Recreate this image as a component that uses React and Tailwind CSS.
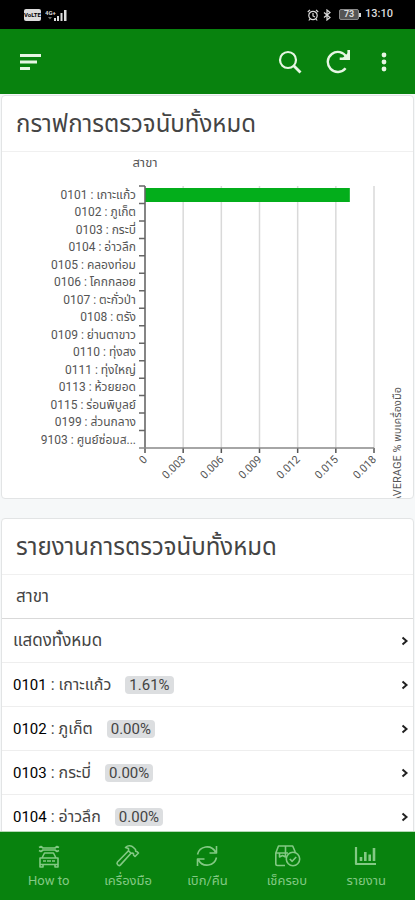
import React from 'react';

const BRANCHES = [
    { code: '0101', name: 'เกาะแก้ว', value: 0.0161 },
    { code: '0102', name: 'ภูเก็ต', value: 0 },
    { code: '0103', name: 'กระบี่', value: 0 },
    { code: '0104', name: 'อ่าวลึก', value: 0 },
    { code: '0105', name: 'คลองท่อม', value: 0 },
    { code: '0106', name: 'โคกกลอย', value: 0 },
    { code: '0107', name: 'ตะกั่วป่า', value: 0 },
    { code: '0108', name: 'ตรัง', value: 0 },
    { code: '0109', name: 'ย่านตาขาว', value: 0 },
    { code: '0110', name: 'ทุ่งสง', value: 0 },
    { code: '0111', name: 'ทุ่งใหญ่', value: 0 },
    { code: '0113', name: 'ห้วยยอด', value: 0 },
    { code: '0115', name: 'ร่อนพิบูลย์', value: 0 },
    { code: '0199', name: 'ส่วนกลาง', value: 0 },
    { code: '9103', name: 'ศูนย์ซ่อมส...', value: 0 },
];

const TICKS = [0, 0.003, 0.006, 0.009, 0.012, 0.015, 0.018];

// Chart geometry, in viewBox units
const PLOT = { left: 143, right: 372, top: 34, bottom: 296 };
const xFor = (value) => PLOT.left + (value / 0.018) * (PLOT.right - PLOT.left);
const BAND = (PLOT.bottom - PLOT.top) / BRANCHES.length;

const StatusBar = () => (
    <div className="flex h-[29px] shrink-0 items-center justify-between bg-black pl-6 pr-[22px] text-[#dcdcdc]">
        <div className="flex items-center gap-1">
            <span className="flex h-3 w-[17px] items-center justify-center rounded-xs bg-[#dcdcdc] text-[6px] font-bold text-black">VoLTE</span>
            <svg className="h-3 w-[22px]" viewBox="0 0 22 12" fill="currentColor">
                <text x="0" y="6" fontSize="6" fontWeight="700">4G+</text>
                <path d="M3 8h4l-2 2.500z" opacity=".5" />
                <path d="M9 9h2v3H9zM12 7h2v5h-2zM15.500 4h2v8h-2zM19 1h2.500v11H19z" />
            </svg>
        </div>
        <div className="flex items-center gap-1">
            <svg className="size-3" viewBox="0 0 12 12" fill="none" stroke="currentColor" strokeWidth="1.200">
                <circle cx="6" cy="6.500" r="4.200" />
                <path d="M6 4v3l2 1M.8 3 3 .8M11.200 3 9 .8M3 10l-1.200 1.500M9 10l1.200 1.500" />
            </svg>
            <svg className="h-3 w-2" viewBox="0 0 8 12" fill="none" stroke="currentColor" strokeWidth="1.200">
                <path d="M1 3.500 7 8.500 4 11V1l3 2.500L1 8.500" />
            </svg>
            <div className="flex items-center pl-1">
                <span className="flex h-[11px] w-5 items-center justify-center rounded-xs border border-[#8a8a8a] bg-[#555] text-[9px] font-bold">73</span>
                <span className="h-1 w-0.5 bg-[#dcdcdc]" />
            </div>
            <span className="text-[11px] font-medium">13:10</span>
        </div>
    </div>
);

const AppBar = () => (
    <header className="flex h-[65px] shrink-0 items-center bg-[#08820e] pl-[18px] pr-[19px] text-[#e6f6e3]">
        <button aria-label="Menu" className="mr-auto">
            <svg className="size-6" viewBox="0 0 24 24" fill="currentColor">
                <path d="M2 4h21v3H2zM2 10.500h17v3H2zM2 17h10v3H2z" />
            </svg>
        </button>
        <button aria-label="Search" className="mr-6">
            <svg className="size-6" viewBox="0 0 24 24" fill="none" stroke="currentColor" strokeWidth="2.200">
                <circle cx="10" cy="10" r="8" />
                <path d="m15.500 15.500 7 7" strokeWidth="2.800" />
            </svg>
        </button>
        <button aria-label="Refresh" className="mr-[22px]">
            <svg className="size-6" viewBox="0 0 24 24" fill="none" stroke="currentColor" strokeWidth="2.400">
                <path d="M19.600 18.200A10 10 0 1 1 20.500 7" />
                <path d="M22.700 0v8.800h-9" strokeWidth="2.600" />
                <path d="m23 2-7.500 7H23z" fill="currentColor" stroke="none" />
            </svg>
        </button>
        <button aria-label="More options" className="flex w-6 justify-center">
            <svg className="size-5" viewBox="0 0 20 20" fill="currentColor">
                <circle cx="10" cy="3" r="2.400" />
                <circle cx="10" cy="10" r="2.400" />
                <circle cx="10" cy="17" r="2.400" />
            </svg>
        </button>
    </header>
);

const BranchChart = () => (
    <svg className="block w-full" viewBox="0 0 411 346" fontSize="12" fill="#555">
        <text x="143" y="15" fontSize="13" textAnchor="middle">สาขา</text>

        {/* Grid lines and value axis */}
        {TICKS.map((tick) => (
            <g key={tick}>
                <path d={`M${xFor(tick)} ${PLOT.top}V${PLOT.bottom}`} stroke="#d9d9d9" strokeWidth="1.500" />
                <path d={`M${xFor(tick)} ${PLOT.bottom}v5`} stroke="#555" strokeWidth="1.500" />
                <text transform={`translate(${xFor(tick) + 3} ${PLOT.bottom + 12}) rotate(-45)`} textAnchor="end" fontSize="11">
                    {tick}
                </text>
            </g>
        ))}

        {/* One band for each branch */}
        {BRANCHES.map((branch, i) => {
            const y = PLOT.top + i * BAND;
            return (
                <g key={branch.code}>
                    <path d={`M${PLOT.left - 6} ${y}h6`} stroke="#666" strokeWidth="1.500" />
                    <text x={PLOT.left - 9} y={y + 13} textAnchor="end">{branch.code} : {branch.name}</text>
                    <rect x={PLOT.left} y={y + 2} width={xFor(branch.value) - PLOT.left} height="14" fill="#03ae1b" />
                </g>
            );
        })}

        <path d={`M${PLOT.left} ${PLOT.top}V${PLOT.bottom}`} stroke="#666" strokeWidth="1.500" />
        <path d={`M${PLOT.left - 6} ${PLOT.bottom}H${PLOT.right}`} stroke="#888" strokeWidth="1.500" />
        <text transform="translate(399 235) rotate(-90)" textAnchor="end" fontSize="11">AVERAGE % พบเครื่องมือ</text>
    </svg>
);

const Card = ({ title, children }) => (
    <section className="mx-px shrink-0 overflow-hidden rounded-sm border border-[#e2e4e5] bg-white">
        <h2 className="flex h-14 items-center border-b border-[#f0f0f0] px-3.5 text-2xl text-[#444]">{title}</h2>
        {children}
    </section>
);

const Row = ({ children }) => (
    <li className="border-b border-[#eee]">
        <button className="flex h-[43px] w-full items-center pl-[11px] pr-1 text-[#444]">
            {children}
            <svg className="ml-auto h-3 w-2" viewBox="0 0 8 12" fill="none" stroke="#222" strokeWidth="2">
                <path d="m1.500 2.500 4 3.500-4 3.500" />
            </svg>
        </button>
    </li>
);

const TABS = [
    {
        label: 'How to',
        icon: <path d="M2 3.500 4 2.500l2 1.500h12l2-1.500 2 1M2 6.500l2 1L6 6h12l2 1.500 2-1M5 14l2.500-5h9l2.500 5M3 14h18v6.500H3zM3 20.500V23h3v-2.500M18 20.500V23h3v-2.500M6 17h3M15 17h3M10 17h4" />,
    },
    {
        label: 'เครื่องมือ',
        icon: <path d="M9.500 3.500C12 1 15.500 1.500 17.500 3.500l2 2 .2 1.700 1.300.5 1.500 1.300-3.500 3.500-1.500-1.500v-1.500l-1.300-.5-1.200.2-2.500-2.500V4.500zM12.500 6.700 1.500 18c-.8 1-.5 2 .2 2.800.8.8 2 .9 2.800.1L15 9.200" />,
    },
    {
        label: 'เบิก/คืน',
        icon: <path d="M2.500 10.500A9.700 9.700 0 0 1 20.500 8M21.500 2v7H14.500M21.500 13.500A9.700 9.700 0 0 1 3.500 16M2.500 22v-7h7" />,
    },
    {
        label: 'เช็ครอบ',
        icon: (
            <>
                <path d="M10 21.500H2.500C1.300 21.500.8 20.800.8 19.800V9L3.500 2h14.200l2.500 6M.8 9H13M10.500 2v11l-3-1.500-3 1.500V9" />
                <circle cx="18" cy="15" r="6.700" />
                <path d="m14.800 15 2.400 2.300 4-4.300" />
            </>
        ),
    },
    {
        label: 'รายงาน',
        icon: (
            <>
                <path d="M2 3v17h20" strokeWidth="2.200" />
                <path d="M7 13v4M11.300 8v9M15.700 10.500V17M20 4v13" strokeWidth="2.600" />
            </>
        ),
    },
];

const BottomNav = () => (
    <nav className="grid h-[69px] shrink-0 grid-cols-5 border-t border-[#b5d9b6] bg-[#08820e] px-[9px] text-[#83c984]">
        {TABS.map((tab) => (
            <button key={tab.label} className="flex flex-col items-center pt-3 text-[13px]">
                <svg className="h-6 w-6 overflow-visible" viewBox="0 0 24 24" fill="none" stroke="currentColor" strokeWidth="1.600" strokeLinejoin="round">
                    {tab.icon}
                </svg>
                <span className="h-6 whitespace-nowrap leading-[26px]">{tab.label}</span>
            </button>
        ))}
    </nav>
);

export default function App() {
    return (
        <div className="flex h-screen flex-col bg-[#f6f8f9] font-[Roboto,'Noto_Sans_Thai','Noto_Sans',sans-serif]">
            <StatusBar />
            <AppBar />
            <main className="flex min-h-0 flex-1 flex-col gap-[19px] overflow-y-auto pt-px [scrollbar-width:none]">
                <Card title="กราฟการตรวจนับทั้งหมด">
                    <BranchChart />
                </Card>
                <Card title="รายงานการตรวจนับทั้งหมด">
                    <div className="flex h-11 items-center border-b border-[#d9d9d9] px-3.5 text-[17px] text-[#444]">สาขา</div>
                    <ul>
                        <Row><span className="text-[17px]">แสดงทั้งหมด</span></Row>
                        {BRANCHES.slice(0, 4).map((branch) => (
                            <Row key={branch.code}>
                                <span className="whitespace-pre text-base">
                                    <span className="text-[15px] text-black">{branch.code}</span> : {branch.name}
                                </span>
                                <span className="ml-3.5 rounded-sm bg-[#dcdee0] px-1 text-[15px] leading-[18px]">
                                    {(branch.value * 100).toFixed(2)}%
                                </span>
                            </Row>
                        ))}
                    </ul>
                </Card>
            </main>
            <BottomNav />
        </div>
    );
}
